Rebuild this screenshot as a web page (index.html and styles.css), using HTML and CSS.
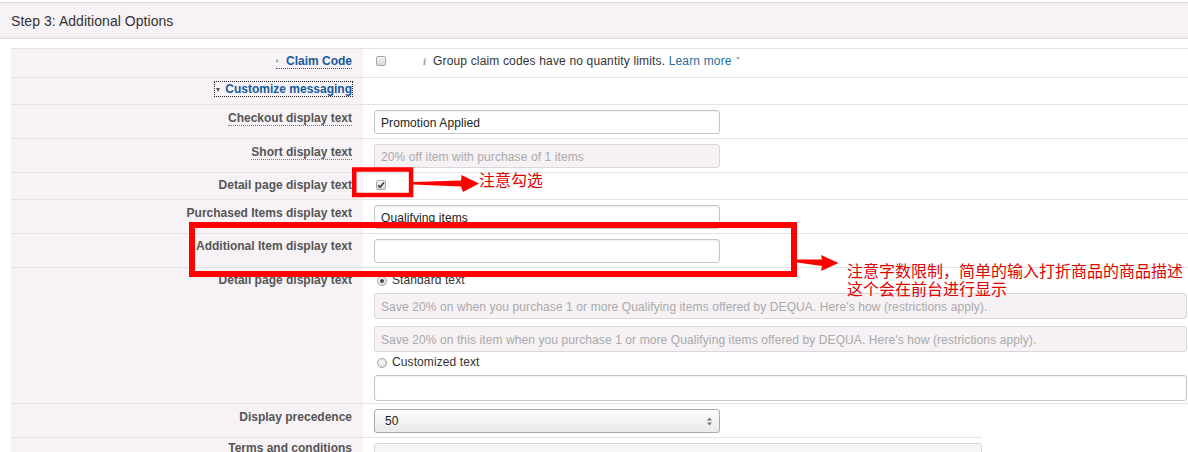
FILE: index.html
```html
<!DOCTYPE html>
<html lang="en">
<head>
<meta charset="utf-8">
<title>Step 3: Additional Options</title>
<link rel="stylesheet" href="styles.css">
</head>
<body>
<div class="page">
  <div class="step-header">Step 3: Additional Options</div>
  <div class="form">
    <div class="row h-claim">
      <div class="lbl pt4"><a class="toggle claim"><span class="tri-right"></span>Claim Code</a></div>
      <div class="val pt4"><span class="cb"></span><span class="info">i</span><span class="msg">Group claim codes have no quantity limits. <a class="learn">Learn more</a><span class="caret"></span></span></div>
    </div>
    <div class="row h-custom">
      <div class="lbl pt3"><a class="toggle focus"><span class="tri-down"></span>Customize messaging</a></div>
      <div class="val"></div>
    </div>
    <div class="row h-input">
      <div class="lbl pt5"><span class="hint">Checkout display text</span></div>
      <div class="val pt5"><input class="txt" type="text" value="Promotion Applied"></div>
    </div>
    <div class="row h-input">
      <div class="lbl pt5"><span class="hint">Short display text</span></div>
      <div class="val pt5"><input class="txt dis" type="text" disabled value="20% off item with purchase of 1 items"></div>
    </div>
    <div class="row h-check">
      <div class="lbl pt4">Detail page display text</div>
      <div class="val pt4"><span class="cb on"><svg width="8" height="8" viewBox="0 0 8 8"><path d="M1.2 4.2 L3.1 6.2 L6.9 1.4" fill="none" stroke="#3a3a3a" stroke-width="1.6"/></svg></span></div>
    </div>
    <div class="row h-input">
      <div class="lbl pt5">Purchased Items display text</div>
      <div class="val pt5"><input class="txt" type="text" value="Qualifying items"></div>
    </div>
    <div class="row h-input">
      <div class="lbl pt4">Additional Item display text</div>
      <div class="val pt5"><input class="txt" type="text" value=""></div>
    </div>
    <div class="row h-radio">
      <div class="lbl pt4">Detail page display text</div>
      <div class="val pt4">
        <div class="radio-line"><span class="rb on"></span>Standard text</div>
        <input class="txt wide dis first" type="text" disabled value="Save 20% on when you purchase 1 or more Qualifying items offered by DEQUA. Here's how (restrictions apply).">
        <input class="txt wide dis second" type="text" disabled value="Save 20% on this item when you purchase 1 or more Qualifying items offered by DEQUA. Here's how (restrictions apply).">
        <div class="radio-line second-radio"><span class="rb"></span>Customized text</div>
        <input class="txt wide first" type="text" value="">
      </div>
    </div>
    <div class="row h-prec">
      <div class="lbl pt5">Display precedence</div>
      <div class="val pt5">
        <div class="select"><span>50</span><svg class="updown" width="5" height="9" viewBox="0 0 5 9"><polygon points="0,3.5 2.5,0.5 5,3.5" fill="#777"/><polygon points="0,5.5 5,5.5 2.5,8.5" fill="#777"/></svg></div>
      </div>
    </div>
    <div class="row terms">
      <div class="lbl pt2">Terms and conditions</div>
      <div class="val pt5"><textarea class="area" disabled></textarea></div>
    </div>
  </div>

  <svg class="marks" width="1188" height="452" viewBox="0 0 1188 452">
    <rect x="354.25" y="169.5" width="56.8" height="25.5" fill="none" stroke="#f00" stroke-width="4.5"/>
    <polygon points="413,182 461,180.5 461.5,175 479,183.5 463,192 461,186.5 413,184.5" fill="#f00"/>
    <rect x="192" y="225" width="602" height="49" fill="none" stroke="#f00" stroke-width="6"/>
    <polygon points="797,259.5 822,259.5 821,255 838.5,263 821,271 822,266 797,262.5" fill="#f00"/>
  </svg>
  <div class="note note-1">注意勾选</div>
  <div class="note note-2">注意字数限制，简单的输入打折商品的商品描述<br>这个会在前台进行显示</div>
</div>
</body>
</html>
```
FILE: styles.css
```css
* { box-sizing: border-box; }
html, body { margin: 0; padding: 0; background: #fff; }
body {
  font-family: "Liberation Sans", Arial, sans-serif;
  font-size: 12px;
  color: #333;
  width: 1188px;
  height: 452px;
  overflow: hidden;
}
.page { position: relative; width: 1188px; height: 452px; padding-top: 2px; }

.step-header {
  height: 37px;
  border-top: 1px solid #dcdcdc;
  border-bottom: 1px solid #dcdcdc;
  background: #f7f2f5;
  box-shadow: inset 0 2px 0 #f2edf0, inset 0 -2px 0 #f2edf0;
  padding-left: 11px;
  font-size: 14px;
  line-height: 36px;
  color: #333;
  letter-spacing: 0.05px;
}

.form { margin: 9px 0 0 11px; border-top: 1px solid #e3e3e3; }

.row {
  display: grid;
  grid-template-columns: 352px 1fr;
  border-bottom: 1px solid #e3e3e3;
}
.h-claim { height: 29px; }
.h-custom { height: 27px; }
.h-input { height: 34px; }
.h-check { height: 27px; }
.h-radio { height: 136px; }
.h-prec { height: 33px; border-bottom: none; }
.terms { width: 971px; height: 20px; border-top: 1px solid #e3e3e3; border-bottom: none; }

.lbl {
  background: #f6f2f5;
  text-align: right;
  padding-right: 11px;
  font-weight: bold;
  color: #555;
  line-height: 17px;
  white-space: nowrap;
}
.val { padding-left: 11px; line-height: 17px; white-space: nowrap; }
.pt2 { padding-top: 2px; }
.pt3 { padding-top: 3px; }
.pt4 { padding-top: 4px; }
.pt5 { padding-top: 5px; }

.toggle { color: #145a9c; text-decoration: none; cursor: pointer; }
.toggle.claim { border-bottom: 1px dotted #145a9c; }
.toggle.focus { outline: 1px dotted #222; padding-left: 1px; }
.tri-right {
  display: inline-block;
  width: 0; height: 0;
  border-top: 2px solid transparent;
  border-bottom: 2px solid transparent;
  border-left: 3px solid #aaa;
  margin-right: 7px;
  vertical-align: 2px;
}
.tri-down {
  display: inline-block;
  width: 0; height: 0;
  border-left: 2.5px solid transparent;
  border-right: 2.5px solid transparent;
  border-top: 4px solid #555;
  margin-right: 5px;
  vertical-align: 1px;
}
.hint { border-bottom: 1px dotted #777; }

.cb {
  display: inline-block;
  width: 10px; height: 10px;
  margin-left: 2px;
  border: 1px solid #a9a9a9;
  border-radius: 2px;
  background: linear-gradient(#f4f4f4, #d9d9d9);
  vertical-align: -1px;
  position: relative;
}
.cb svg { position: absolute; left: 0; top: 0; }
.info {
  display: inline-block;
  width: 10px;
  margin-left: 37px;
  font-family: "Liberation Serif", serif;
  font-style: italic;
  font-weight: bold;
  font-size: 11px;
  color: #999;
}
.msg { color: #333; letter-spacing: 0.16px; }
.learn { color: #1f6f9a; text-decoration: none; }
.caret {
  display: inline-block;
  width: 0; height: 0;
  border-left: 2.5px solid transparent;
  border-right: 2.5px solid transparent;
  border-top: 3px solid #aaa;
  margin-left: 4px;
  vertical-align: 5px;
}

.txt {
  display: block;
  width: 346px;
  height: 24px;
  margin: 0;
  padding: 1px 6px 0;
  border: 1px solid #c6c6c6;
  border-radius: 3px;
  box-shadow: inset 0 1px 2px rgba(0, 0, 0, 0.07);
  background: #fff;
  font-family: "Liberation Sans", Arial, sans-serif;
  font-size: 12px;
  letter-spacing: 0.1px;
  color: #222;
  outline: none;
}
.txt.dis {
  background: #f5f1f4;
  border-color: #d9d5d8;
  color: #aaa;
  box-shadow: none;
}
.txt.wide { width: 813px; height: 26px; }
.txt.first { margin-top: 4px; }
.txt.second { margin-top: 7px; }

.radio-line { height: 17px; line-height: 17px; color: #333; letter-spacing: 0.1px; }
.radio-line.second-radio { margin-top: 2px; }
.rb {
  display: inline-block;
  width: 10px; height: 10px;
  margin-left: 3px;
  margin-right: 5px;
  border: 1px solid #a5a5a5;
  border-radius: 50%;
  background: radial-gradient(circle at 40% 35%, #fafafa, #d4d4d4);
  vertical-align: -2px;
  position: relative;
}
.rb.on::after {
  content: "";
  position: absolute;
  left: 2px; top: 2px;
  width: 4px; height: 4px;
  border-radius: 50%;
  background: #4a4a4a;
}

.select {
  display: flex;
  align-items: center;
  justify-content: space-between;
  width: 346px;
  height: 24px;
  padding: 1px 7px 0 10px;
  border: 1px solid #aaa;
  border-radius: 3px;
  background: linear-gradient(#fdfdfd, #e9e9e9);
  color: #222;
}
.updown { display: block; }

.area {
  display: block;
  width: 608px;
  height: 30px;
  margin: 0;
  border: 1px solid #d6d6d6;
  border-radius: 3px;
  background: #f6f6f6;
  resize: none;
}

.marks { position: absolute; left: 0; top: 0; pointer-events: none; }
.note {
  position: absolute;
  font-family: "Noto Sans CJK SC", sans-serif;
  font-size: 16px;
  line-height: 18px;
  color: #e00000;
  white-space: nowrap;
}
.note-1 { left: 479px; top: 170px; }
.note-2 { left: 847px; top: 261px; }
```
